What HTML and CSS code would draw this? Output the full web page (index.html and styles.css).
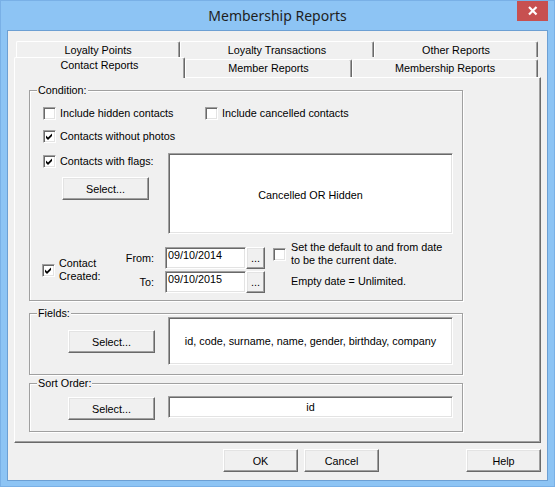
FILE: index.html
```html
<!DOCTYPE html>
<html lang="en">
<head>
  <meta charset="UTF-8" />
  <title>Membership Reports</title>
  <link rel="stylesheet" href="styles.css">
</head>
<body>

<div class="window">
  <!-- Title bar -->
  <div class="titlebar">
    <span></span>
    <div class="title">Membership Reports</div>
    <div class="close">
      <svg width="31" height="20" viewBox="0 0 31 20"><path d="M12 6 L19.5 13.5 M19.5 6 L12 13.5" stroke="#fff" stroke-width="2.2" fill="none"/></svg>
    </div>
  </div>

  <div class="client">
    <!-- Tabs -->
    <div class="tab-row back">
      <div class="tab" style="width:164px">Loyalty Points</div>
      <div class="tab" style="width:194px">Loyalty Transactions</div>
      <div class="tab" style="width:164px">Other Reports</div>
    </div>
    <div class="tab-row front">
      <div class="tab active" style="width:171px">Contact Reports</div>
      <div class="tab" style="width:167px">Member Reports</div>
      <div class="tab" style="width:186px">Membership Reports</div>
    </div>

    <div class="panel">
      <!-- Condition -->
      <div class="group condition">
        <span class="legend">Condition:</span>
        <div class="check-row">
          <label class="check first"><span class="box"></span>Include hidden contacts</label>
          <label class="check"><span class="box"></span>Include cancelled contacts</label>
        </div>
        <div class="check-row gap">
          <label class="check"><span class="box checked"></span>Contacts without photos</label>
        </div>
        <div class="flags">
          <div class="flags-left">
            <label class="check"><span class="box checked"></span>Contacts with flags:</label>
            <div class="btn select flags-btn">Select...</div>
          </div>
          <div class="field flags-box">Cancelled OR Hidden</div>
        </div>
        <div class="dates">
          <label class="check created"><span class="box checked"></span><span>Contact<br>Created:</span></label>
          <div class="range">
            <span class="range-label">From:</span>
            <div class="field date">09/10/2014</div>
            <div class="btn dots">...</div>
            <span class="range-label">To:</span>
            <div class="field date">09/10/2015</div>
            <div class="btn dots">...</div>
          </div>
          <div class="default-note">
            <label class="check"><span class="box"></span><span>Set the default to and from date<br>to be the current date.</span></label>
            <div class="empty-note">Empty date = Unlimited.</div>
          </div>
        </div>
      </div>

      <!-- Fields -->
      <div class="group fields">
        <span class="legend">Fields:</span>
        <div class="btn select">Select...</div>
        <div class="field fields-box">id, code, surname, name, gender, birthday, company</div>
      </div>

      <!-- Sort Order -->
      <div class="group sort">
        <span class="legend">Sort Order:</span>
        <div class="btn select">Select...</div>
        <div class="field sort-box">id</div>
      </div>
    </div>

    <!-- Dialog buttons -->
    <div class="dialog-buttons">
      <div class="btn wide">OK</div>
      <div class="btn wide">Cancel</div>
      <div class="btn wide help">Help</div>
    </div>
  </div>
</div>

</body>
</html>
```

FILE: styles.css
```css
* { margin: 0; padding: 0; box-sizing: border-box; }
body {
  font-family: 'Liberation Sans', Arial, sans-serif;
  font-size: 10.8px;
  color: #000;
  background: #8dc4f4;
}
.window {
  width: 555px; height: 487px;
  background: #8dc4f4;
  border: 1px solid #79b0e6;
  padding: 0 6px 5px 6px;
}
.titlebar {
  height: 29px;
  display: grid;
  grid-template-columns: 31px 1fr 31px;
  align-items: center;
}
.title {
  text-align: center;
  font-family: 'Noto Sans', sans-serif;
  font-size: 14px;
  color: #1e1e1e;
}
.close {
  align-self: start;
  width: 31px; height: 20px;
  background: #c75050;
}
.close svg { display: block; }
.client {
  height: 451px;
  background: #f0f0f0;
  border: 1px solid #6c9fd3;
  padding-top: 10px;
}

/* tabs */
.tab-row { display: flex; }
.tab-row.back { height: 16px; margin-left: 8px; }
.tab-row.front { height: 20px; margin-left: 6px; align-items: flex-end; }
.tab {
  border: 1px solid;
  border-color: #fff #696969 transparent #fff;
  border-bottom: none;
  border-radius: 2px 2px 0 0;
  box-shadow: inset -1px 0 #a0a0a0;
  background: #f0f0f0;
  text-align: center;
  line-height: 13px;
}
.back .tab { height: 16px; padding-top: 2px; }
.front .tab { height: 18px; padding-top: 1px; line-height: 14px; }
.front .tab.active {
  position: relative;
  height: 21px;
  margin-bottom: -1px;
  padding-top: 0;
}

.panel {
  margin-left: 6px;
  width: 527px; height: 366px;
  border: 1px solid;
  border-color: #fff #696969 #696969 #fff;
  box-shadow: inset -1px -1px #a0a0a0;
  padding: 12px 0 0 14px;
}

/* group boxes */
.group {
  position: relative;
  width: 434px;
  border: 1px solid #a0a0a0;
  box-shadow: inset 1px 1px #fff, 1px 1px #fff;
}
.legend {
  position: absolute;
  top: -7px; left: 7px;
  padding: 0 1px;
  line-height: 13px;
  background: #f0f0f0;
}
.condition { height: 211px; padding: 16px 0 0 13px; }
.fields {
  margin-top: 12px; height: 62px;
  padding: 3px 0 0 38px;
  display: flex; align-items: flex-start; gap: 13px;
}
.fields .select { margin-top: 13px; }
.sort {
  margin-top: 8px; height: 49px;
  padding: 12px 0 0 38px;
  display: flex; align-items: flex-start; gap: 13px;
}

/* checkboxes */
.check-row { display: flex; height: 13px; }
.check-row.gap { margin-top: 10px; }
.check { display: flex; align-items: center; gap: 4px; line-height: 13px; }
.check.first { width: 162px; }
.box {
  flex: none;
  width: 13px; height: 13px;
  background: #fff;
  border: 1px solid;
  border-color: #a0a0a0 #fff #fff #a0a0a0;
  box-shadow: inset 1px 1px #696969, inset -1px -1px #e3e3e3;
}
.box.checked {
  background: #fff url("data:image/svg+xml,%3Csvg xmlns='http://www.w3.org/2000/svg' width='11' height='11'%3E%3Cpolygon points='2,4.5 4,6.5 8,2.5 8,5 4,9 2,7' fill='%23000'/%3E%3C/svg%3E") no-repeat center;
}

/* buttons and fields */
.btn {
  display: flex; align-items: center; justify-content: center;
  height: 23px;
  background: #f0f0f0;
  border: 1px solid;
  border-color: #fff #696969 #696969 #fff;
  box-shadow: inset -1px -1px #a0a0a0, inset 1px 1px #e3e3e3;
}
.select { width: 87px; flex: none; }
.sort .select { margin-top: 1px; }
.field {
  background: #fff;
  border: 1px solid;
  border-color: #a0a0a0 #fff #fff #a0a0a0;
  box-shadow: inset 1px 1px #696969, inset -1px -1px #e3e3e3;
  display: flex; align-items: center; justify-content: center;
}
.fields-box { width: 285px; height: 48px; }
.sort-box { width: 285px; height: 22px; }

.flags { display: flex; margin-top: 10px; }
.flags-left { width: 125px; }
.flags-left .check { height: 13px; margin-top: 2px; }
.flags-btn { margin: 9px 0 0 19px; }
.flags-box { width: 285px; height: 81px; padding-top: 3px; }

.dates { display: flex; align-items: flex-start; margin-top: 13px; }
.created { width: 80px; height: 46px; margin-left: -1px; }
.range {
  display: grid;
  grid-template-columns: 43px 81px 19px;
  grid-template-rows: 22px 22px;
  row-gap: 2px;
  align-items: center;
}
.range-label { text-align: right; margin-right: 11px; }
.date {
  height: 22px;
  justify-content: flex-start; align-items: flex-start;
  padding: 1px 0 0 2px;
  line-height: 13px;
}
.dots { height: 22px; }
.default-note { margin: -6px 0 0 8px; }
.default-note .check { gap: 5px; }
.empty-note { margin-top: 8px; padding-left: 18px; line-height: 13px; }

.dialog-buttons {
  display: flex; gap: 6px;
  margin-top: 6px;
  padding-left: 215px;
}
.wide { width: 75px; }
.help { margin-left: 81px; }
```
